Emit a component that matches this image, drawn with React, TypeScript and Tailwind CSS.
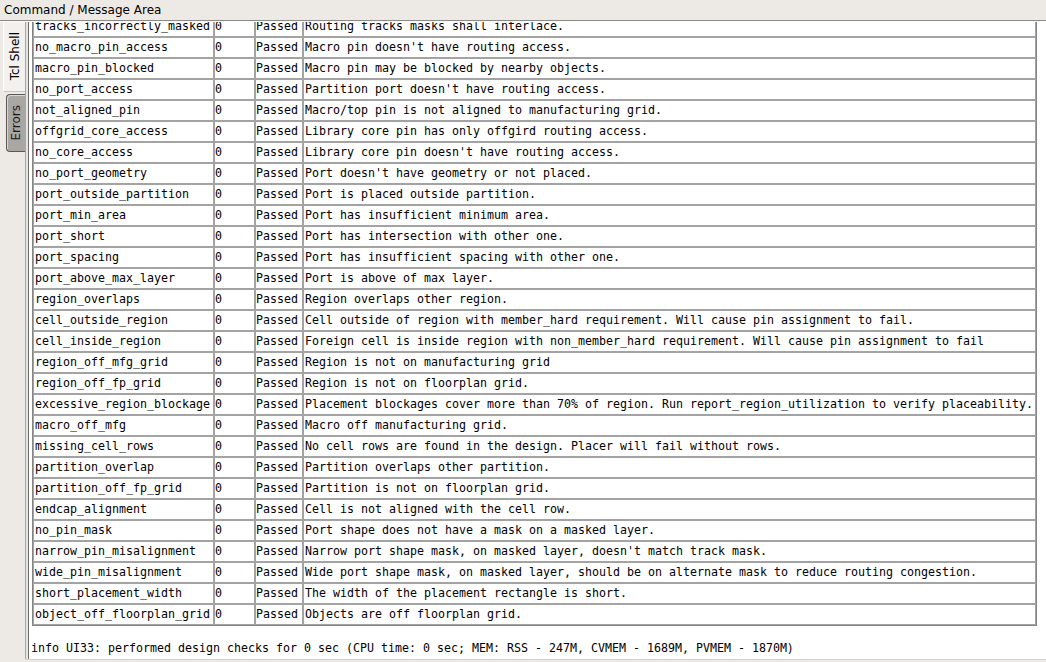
import React from "react";

const rows: [string, string][] = [
  ["tracks_incorrectly_masked", "Routing tracks masks shall interlace."],
  ["no_macro_pin_access", "Macro pin doesn't have routing access."],
  ["macro_pin_blocked", "Macro pin may be blocked by nearby objects."],
  ["no_port_access", "Partition port doesn't have routing access."],
  ["not_aligned_pin", "Macro/top pin is not aligned to manufacturing grid."],
  ["offgrid_core_access", "Library core pin has only offgird routing access."],
  ["no_core_access", "Library core pin doesn't have routing access."],
  ["no_port_geometry", "Port doesn't have geometry or not placed."],
  ["port_outside_partition", "Port is placed outside partition."],
  ["port_min_area", "Port has insufficient minimum area."],
  ["port_short", "Port has intersection with other one."],
  ["port_spacing", "Port has insufficient spacing with other one."],
  ["port_above_max_layer", "Port is above of max layer."],
  ["region_overlaps", "Region overlaps other region."],
  ["cell_outside_region", "Cell outside of region with member_hard requirement. Will cause pin assignment to fail."],
  ["cell_inside_region", "Foreign cell is inside region with non_member_hard requirement. Will cause pin assignment to fail"],
  ["region_off_mfg_grid", "Region is not on manufacturing grid"],
  ["region_off_fp_grid", "Region is not on floorplan grid."],
  ["excessive_region_blockage", "Placement blockages cover more than 70% of region. Run report_region_utilization to verify placeability."],
  ["macro_off_mfg", "Macro off manufacturing grid."],
  ["missing_cell_rows", "No cell rows are found in the design. Placer will fail without rows."],
  ["partition_overlap", "Partition overlaps other partition."],
  ["partition_off_fp_grid", "Partition is not on floorplan grid."],
  ["endcap_alignment", "Cell is not aligned with the cell row."],
  ["no_pin_mask", "Port shape does not have a mask on a masked layer."],
  ["narrow_pin_misalignment", "Narrow port shape mask, on masked layer, doesn't match track mask."],
  ["wide_pin_misalignment", "Wide port shape mask, on masked layer, should be on alternate mask to reduce routing congestion."],
  ["short_placement_width", "The width of the placement rectangle is short."],
  ["object_off_floorplan_grid", "Objects are off floorplan grid."],
];

const cell =
  "border border-[#a3a3a3] pl-[1px] pr-0 py-0 leading-[19px] h-[21px] whitespace-nowrap overflow-hidden align-middle";
const cellTight =
  "border border-[#a3a3a3] pl-0 pr-0 py-0 leading-[19px] h-[21px] whitespace-nowrap overflow-hidden align-middle";

export default function App() {
  return (
    <div
      className="w-[1046px] h-[662px] bg-[#edeae5] flex flex-col overflow-hidden text-black"
      style={{ fontFamily: "'DejaVu Sans', sans-serif" }}
    >
      {/* title bar */}
      <div className="h-[22px] shrink-0 flex flex-col">
        <div className="h-[20px] flex items-center pl-[4px] text-[12px] leading-[20px]">
          Command / Message Area
        </div>
        <div className="h-[1px] bg-[#8c8a86]" />
        <div className="h-[1px] bg-[#fbfaf9]" />
      </div>

      <div className="flex flex-1 min-h-0">
        {/* vertical tabs */}
        <div className="w-[25px] shrink-0 flex flex-col">
          <div className="ml-[3px] h-[70px] bg-[#f3f1ee] border-l border-[#ffffff] border-b border-b-[#c9c6c1] flex items-center justify-center">
            <span className="[writing-mode:vertical-rl] rotate-180 text-[12px] leading-[14px]">
              Tcl Shell
            </span>
          </div>
          <div className="ml-[6px] mt-[2px] h-[58px] bg-[#a9a7a3] border border-r-0 border-[#5a5955] rounded-l-[4px] flex items-center justify-center shadow-[inset_1px_1px_0_#d8d6d2]">
            <span className="[writing-mode:vertical-rl] rotate-180 text-[12px] leading-[14px] text-[#1a1a1a]">
              Errors
            </span>
          </div>
        </div>

        {/* content frame */}
        <div className="flex-1 min-w-0 flex flex-col">
          <div className="flex-1 min-h-0 flex border-l border-[#a9a7a3]">
            <div className="w-[2px] bg-[#e6e4e0]" />
            <div className="flex-1 min-w-0 bg-white border-l border-[#6e6d6a] overflow-hidden">
              <div
                className="mt-[-7px] pl-[3px] text-[11.63px]"
                style={{ fontFamily: "'DejaVu Sans Mono', monospace" }}
              >
                <table className="table-fixed border-separate border-spacing-0 border border-[#858585] w-[1005px]">
                  <colgroup>
                    <col className="w-[181px]" />
                    <col className="w-[41px]" />
                    <col className="w-[48px]" />
                    <col className="w-[733px]" />
                  </colgroup>
                  <tbody>
                    {rows.map(([name, desc]) => (
                      <tr key={name}>
                        <td className={cell}>{name}</td>
                        <td className={cellTight}>0</td>
                        <td className={cellTight}>Passed</td>
                        <td className={cell}>{desc}</td>
                      </tr>
                    ))}
                  </tbody>
                </table>
                <div className="mt-[13px] -ml-[1px] leading-[19px] whitespace-nowrap">
                  info UI33: performed design checks for 0 sec (CPU time: 0 sec; MEM: RSS - 247M, CVMEM - 1689M, PVMEM - 1870M)
                </div>
              </div>
            </div>
          </div>
          <div className="h-[1px] bg-[#d4d2ce]" />
          <div className="h-[2px]" />
        </div>
      </div>
    </div>
  );
}
